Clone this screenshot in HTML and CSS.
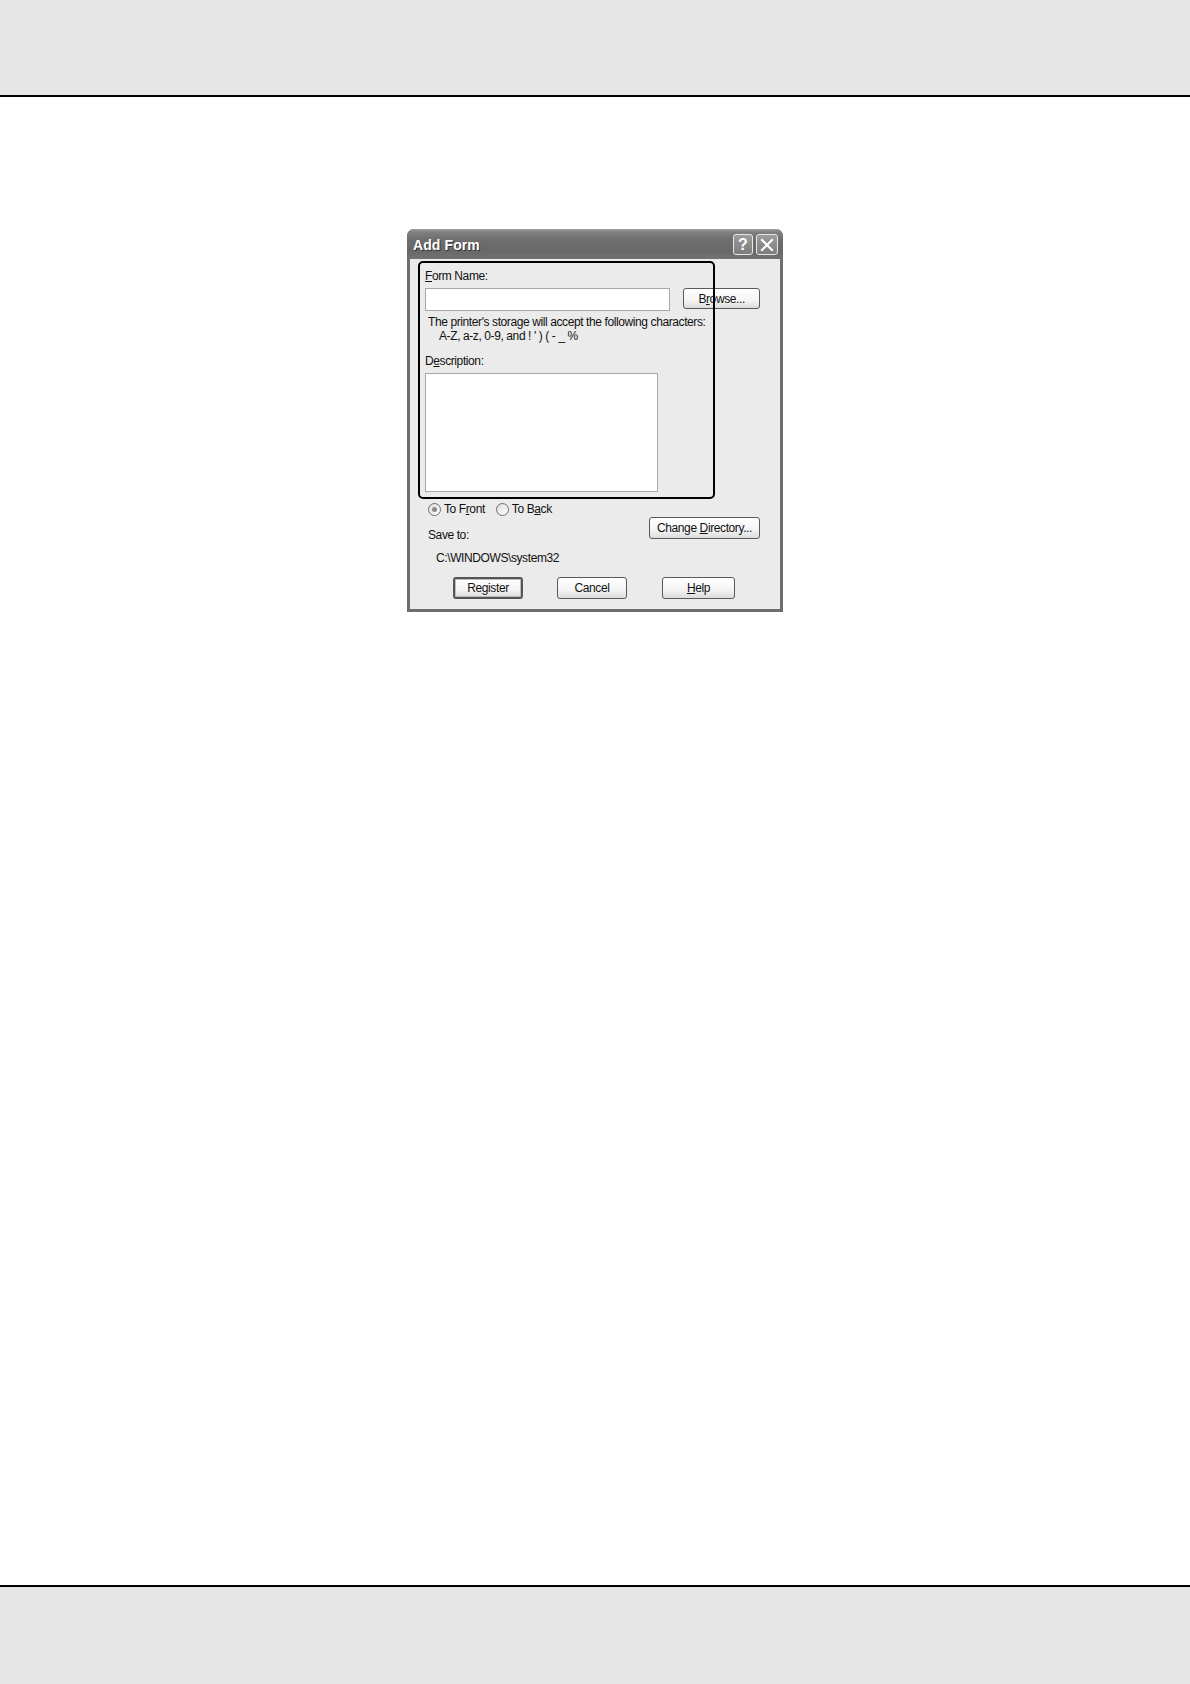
FILE: index.html
```html
<!DOCTYPE html>
<html lang="en">
<head>
<meta charset="utf-8">
<title>Add Form</title>
<link rel="stylesheet" href="styles.css">
</head>
<body>
<div class="page">
  <header class="band band-top"></header>
  <main class="main">
    <div class="dialog">
      <div class="titlebar">
        <span class="title">Add Form</span>
        <div class="tb-buttons">
          <span class="tb-btn">?</span>
          <span class="tb-btn tb-close">
            <svg width="14" height="14" viewBox="0 0 14 14"><path d="M2 2 L12 12 M12 2 L2 12" stroke="#fff" stroke-width="2.2" stroke-linecap="square"/></svg>
          </span>
        </div>
      </div>
      <div class="body">
        <div class="label lbl-form"><u>F</u>orm Name:</div>
        <div class="row-name">
          <div class="input"></div>
          <div class="btn btn-browse"><span>B<u>r</u>owse...</span></div>
        </div>
        <div class="hint">
          <div class="hint1">The printer's storage will accept the following characters:</div>
          <div class="hint2">A-Z, a-z, 0-9, and ! ' ) ( - _ %</div>
        </div>
        <div class="label lbl-desc">D<u>e</u>scription:</div>
        <div class="textarea"></div>
        <div class="radios">
          <span class="radio checked"></span><span class="rlabel">To F<u>r</u>ont</span>
          <span class="radio"></span><span class="rlabel">To B<u>a</u>ck</span>
        </div>
        <div class="row-save">
          <span class="save-label">Save to:</span>
          <div class="btn btn-dir"><span>Change <u>D</u>irectory...</span></div>
        </div>
        <div class="path">C:\WINDOWS\system32</div>
        <div class="actions">
          <div class="btn btn-act btn-default"><span>Re<u>g</u>ister</span></div>
          <div class="btn btn-act btn-cancel"><span>Cancel</span></div>
          <div class="btn btn-act btn-help"><span><u>H</u>elp</span></div>
        </div>
      </div>
      <div class="callout"></div>
    </div>
  </main>
  <footer class="band band-bottom"></footer>
</div>
</body>
</html>
```

FILE: styles.css
```css
html, body {
  margin: 0;
  padding: 0;
  background: #ffffff;
}
.page {
  width: 1190px;
  height: 1684px;
  display: flex;
  flex-direction: column;
  font-family: "Liberation Sans", Arial, sans-serif;
}
.band {
  background: #e6e6e6;
}
.band-top {
  height: 95px;
  border-bottom: 2px solid #000;
}
.band-bottom {
  height: 97px;
  border-top: 2px solid #000;
}
.main {
  flex: 1;
  padding: 132px 0 0 407px;
}
.dialog {
  position: relative;
  width: 376px;
  height: 383px;
  box-sizing: border-box;
  display: flex;
  flex-direction: column;
  border-radius: 7px 7px 0 0;
  background: #6e6e6e;
}
.titlebar {
  height: 30px;
  border-radius: 7px 7px 0 0;
  background: linear-gradient(to bottom, #a0a0a0 0px, #808080 3px, #6f6f6f 10px, #686868 22px, #727272 30px);
  display: flex;
  align-items: center;
  justify-content: space-between;
  padding: 0 5px 0 6px;
}
.title {
  color: #ffffff;
  font-weight: bold;
  font-size: 14px;
  letter-spacing: 0.1px;
  text-shadow: 1px 1px 0 #333;
  margin-top: 2px;
}
.tb-buttons {
  display: flex;
  gap: 3px;
  margin-top: 1px;
}
.tb-btn {
  width: 20px;
  height: 21px;
  box-sizing: border-box;
  border: 1px solid #e8e8e8;
  border-radius: 3px;
  background: linear-gradient(to bottom, #9c9c9c, #7c7c7c);
  color: #fff;
  font-size: 16px;
  font-weight: bold;
  display: flex;
  align-items: center;
  justify-content: center;
  line-height: 1;
}
.tb-close {
  width: 22px;
}
.body {
  flex: 1;
  margin: 0 3px 3px 3px;
  background: #ebebeb;
  padding: 0 20px 0 15px;
  font-size: 12px;
  letter-spacing: -0.4px;
  color: #111;
  line-height: 14px;
}
u {
  text-decoration: underline;
  text-underline-offset: 1px;
}
.label {
  height: 14px;
}
.lbl-form {
  margin-top: 10px;
}
.row-name {
  display: flex;
  align-items: flex-start;
  margin-top: 5px;
}
.input {
  width: 246px;
  height: 23px;
  box-sizing: border-box;
  border: 1px solid #a8a8a8;
  background: #fff;
}
.btn {
  box-sizing: border-box;
  border: 1px solid #5a5a5a;
  border-radius: 3px;
  background: linear-gradient(to bottom, #ffffff 0%, #f4f4f4 60%, #dcdcdc 100%);
  display: flex;
  align-items: center;
  justify-content: center;
  color: #111;
  white-space: nowrap;
}
.btn-browse {
  width: 77px;
  height: 21px;
  margin-left: 13px;
}
.hint {
  margin-top: 4px;
}
.hint1 {
  padding-left: 3px;
  white-space: nowrap;
}
.hint2 {
  padding-left: 14px;
}
.lbl-desc {
  margin-top: 11px;
}
.textarea {
  margin-top: 5px;
  width: 233px;
  height: 119px;
  box-sizing: border-box;
  border: 1px solid #a8a8a8;
  background: #fff;
}
.radios {
  margin-top: 10px;
  height: 14px;
  display: flex;
  align-items: center;
  padding-left: 3px;
}
.radio {
  width: 13px;
  height: 13px;
  box-sizing: border-box;
  border: 1px solid #6e6e6e;
  border-radius: 50%;
  background: linear-gradient(135deg, #dcdcdc, #ffffff);
  position: relative;
  margin-right: 3px;
}
.radio.checked::after {
  content: "";
  position: absolute;
  left: 3px;
  top: 3px;
  width: 5px;
  height: 5px;
  border-radius: 50%;
  background: #8a8a8a;
}
.rlabel {
  margin-right: 11px;
}
.row-save {
  margin-top: 1px;
  display: flex;
  align-items: flex-start;
  justify-content: space-between;
}
.save-label {
  margin-top: 11px;
  padding-left: 3px;
}
.btn-dir {
  width: 111px;
  height: 22px;
}
.path {
  margin-top: 9px;
  padding-left: 11px;
  height: 14px;
}
.actions {
  margin-top: 12px;
  display: flex;
  padding-left: 28px;
}
.btn-act {
  height: 22px;
}
.btn-default {
  width: 70px;
  border: 2px solid #555;
  box-shadow: inset 0 0 0 1px #bdbdbd;
}
.btn-cancel {
  width: 70px;
  margin-left: 34px;
}
.btn-help {
  width: 73px;
  margin-left: 35px;
}
.callout {
  position: absolute;
  left: 11px;
  top: 32px;
  width: 297px;
  height: 238px;
  box-sizing: border-box;
  border: 2px solid #000;
  border-radius: 5px;
  pointer-events: none;
}
```
